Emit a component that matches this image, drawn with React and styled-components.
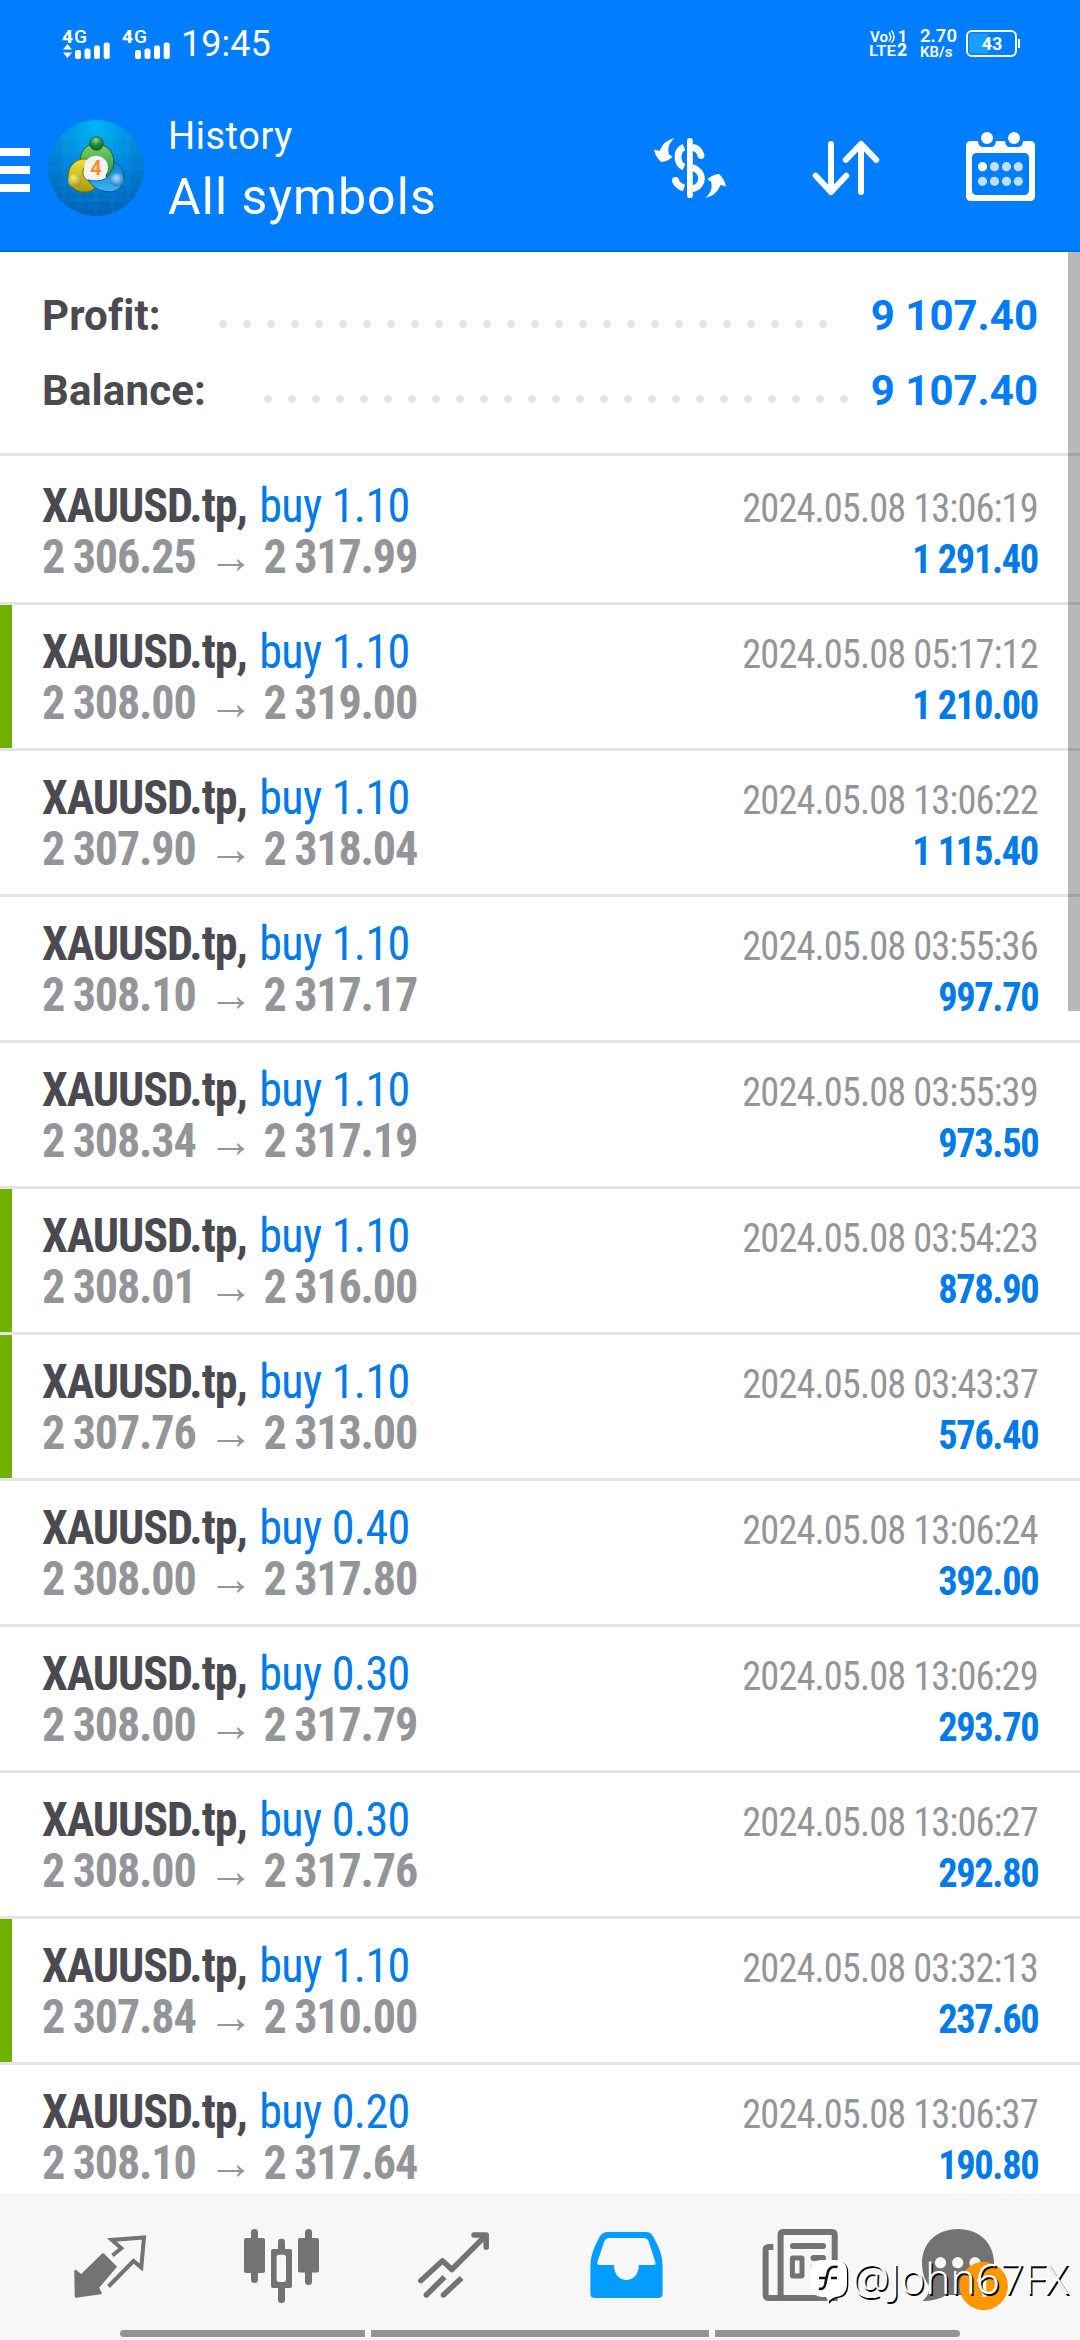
import React from 'react'
import styled, { createGlobalStyle } from 'styled-components'

const GlobalStyle = createGlobalStyle`
  body {
    margin: 0;
    background: #fff;
    font-family: Roboto, sans-serif;
  }
`

const Screen = styled.div`
  position: relative;
  width: 1080px;
  height: 2340px;
  display: flex;
  flex-direction: column;
  overflow: hidden;
  background: #fff;
`

const Header = styled.header`
  flex: none;
  box-sizing: border-box;
  height: 252px;
  color: #fff;
  background: #007eff;
  border-bottom: 2px solid #0070e0;
`

const StatusBar = styled.div`
  box-sizing: border-box;
  height: 84px;
  padding: 3px 58px 0 62px;
  display: flex;
  align-items: center;
`

const Signal = styled.svg`
  flex: none;
  width: 50px;
  height: 40px;
  margin-right: 10px;
`

const Clock = styled.div`
  margin-left: -1px;
  font-size: 36px;
  line-height: 40px;
`

const StatusRight = styled.div`
  margin-left: auto;
  display: flex;
  align-items: center;
`

const Volte = styled.svg`
  width: 42px;
  height: 36px;
`

const Speed = styled.div`
  width: 46px;
  margin-left: 9px;
  font-size: 18.5px;
  line-height: 16px;
  font-weight: 600;
  white-space: nowrap;
`

const SpeedUnit = styled.div`
  font-size: 15px;
`

const Toolbar = styled.div`
  height: 168px;
  padding-right: 38px;
  display: flex;
  align-items: center;
`

const Menu = styled.div`
  width: 30px;
  margin-top: 4px;
  display: grid;
  gap: 10px;
`

const MenuLine = styled.div`
  height: 8px;
  background: #fff;
`

const Logo = styled.svg`
  width: 96px;
  height: 96px;
  margin-left: 18px;
`

const Titles = styled.div`
  flex: 1;
  align-self: flex-start;
  margin: 26px 0 0 24px;
`

const Title = styled.div`
  font-size: 38px;
  line-height: 52px;
  letter-spacing: 0.55px;
`

const Subtitle = styled.div`
  font-size: 50px;
  line-height: 70px;
  letter-spacing: 1.05px;
`

const Actions = styled.div`
  display: flex;
  gap: 70px;
`

const ActionIcon = styled.svg`
  width: 84px;
  height: 84px;
`

const History = styled.main`
  position: relative;
  flex: 1;
  min-height: 0;
  overflow: hidden;
`

const ScrollThumb = styled.div`
  position: absolute;
  top: 0;
  right: 0;
  width: 12px;
  height: 759px;
  background: rgba(0, 0, 0, 0.28);
`

const Summary = styled.section`
  padding: 26px 42px 25px;
  border-bottom: 3px solid #e4e4e4;
`

const SummaryRow = styled.div`
  height: 75px;
  display: flex;
  align-items: center;
  font-size: 42px;
  font-weight: 700;
`

const SummaryLabel = styled.div`
  width: ${({ $width }) => $width}px;
  letter-spacing: 0.15px;
  color: #4b4a50;
`

const Dots = styled.div`
  width: ${({ $count }) => $count * 24}px;
  height: 8px;
  margin-top: 16px;
  background: radial-gradient(circle at center, #e4e4e4 3.6px, transparent 4.2px) 0 0 / 24px 8px repeat-x;
`

const SummaryValue = styled.div`
  margin-left: auto;
  color: #007cf8;
`

const Deals = styled.section`
  padding-top: 3px;
`

const Deal = styled.article`
  height: 143px;
  display: flex;
  border-bottom: 3px solid #e4e4e4;
`

const Marker = styled.div`
  width: 12px;
  background: ${({ $marked }) => ($marked ? '#70b000' : 'transparent')};
`

const DealBody = styled.div`
  flex: 1;
  padding: 21px 42px 0 30px;
`

const Line = styled.div`
  height: 51px;
  display: flex;
  align-items: baseline;
  justify-content: space-between;
  line-height: 51px;
  white-space: nowrap;
  font-stretch: 75%;
`

const LeftText = styled.div`
  font-size: 48px;
  font-weight: 700;
  transform: scaleX(0.96);
  transform-origin: left;
`

const RightText = styled.div`
  font-size: 40px;
  transform: scaleX(0.96);
  transform-origin: right;
`

const Symbol = styled(LeftText)`
  letter-spacing: -1.1px;
  color: #4b4a50;
`

const Side = styled.span`
  margin-left: 3px;
  font-weight: 400;
  letter-spacing: -0.6px;
  color: #007be8;
`

const Prices = styled(LeftText)`
  letter-spacing: -1.2px;
  word-spacing: -1px;
  color: #949599;
`

const Arrow = styled.span`
  margin: 0 12px 0 13px;
  font-family: "Liberation Sans", sans-serif;
  font-size: 47px;
  font-weight: 400;
`

const DealTime = styled(RightText)`
  letter-spacing: -0.93px;
  color: #949599;
`

const DealProfit = styled(RightText)`
  font-weight: 700;
  letter-spacing: -1.4px;
  color: #007be8;
`

const TabBar = styled.nav`
  flex: none;
  height: 147px;
  background: #f7f7f7;
`

const Tabs = styled.div`
  height: 137px;
  padding: 0 24px;
  display: grid;
  grid-template-columns: repeat(6, 1fr);
  justify-items: center;
`

const TabIcon = styled.svg`
  width: 96px;
  height: 96px;
  margin-top: 27px;
`

const Grips = styled.div`
  display: grid;
  grid-template-columns: 245px 338px 245px;
  gap: 6px;
  padding: 0 120px;
`

const Grip = styled.div`
  height: 7px;
  background: #949494;

  &:first-child {
    border-radius: 4px 0 0 4px;
  }

  &:last-child {
    border-radius: 0 4px 4px 0;
  }
`

const Watermark = styled.div`
  position: absolute;
  left: 810px;
  bottom: 35px;
  display: flex;
  align-items: center;
  gap: 2px;
  color: #fff;
  font-family: "Noto Sans", "Open Sans", sans-serif;
  font-size: 42px;
  font-weight: 300;
  line-height: 54px;
  letter-spacing: 0.2px;
  text-shadow: 1.5px 1.5px 0 #000;
  white-space: nowrap;
`

const WatermarkLogo = styled.svg`
  width: 40px;
  height: 46px;
  margin-top: 9px;
`

const deals = [
  { volume: '1.10', open: '2 306.25', close: '2 317.99', time: '2024.05.08 13:06:19', profit: '1 291.40' },
  { volume: '1.10', open: '2 308.00', close: '2 319.00', time: '2024.05.08 05:17:12', profit: '1 210.00', marked: true },
  { volume: '1.10', open: '2 307.90', close: '2 318.04', time: '2024.05.08 13:06:22', profit: '1 115.40' },
  { volume: '1.10', open: '2 308.10', close: '2 317.17', time: '2024.05.08 03:55:36', profit: '997.70' },
  { volume: '1.10', open: '2 308.34', close: '2 317.19', time: '2024.05.08 03:55:39', profit: '973.50' },
  { volume: '1.10', open: '2 308.01', close: '2 316.00', time: '2024.05.08 03:54:23', profit: '878.90', marked: true },
  { volume: '1.10', open: '2 307.76', close: '2 313.00', time: '2024.05.08 03:43:37', profit: '576.40', marked: true },
  { volume: '0.40', open: '2 308.00', close: '2 317.80', time: '2024.05.08 13:06:24', profit: '392.00' },
  { volume: '0.30', open: '2 308.00', close: '2 317.79', time: '2024.05.08 13:06:29', profit: '293.70' },
  { volume: '0.30', open: '2 308.00', close: '2 317.76', time: '2024.05.08 13:06:27', profit: '292.80' },
  { volume: '1.10', open: '2 307.84', close: '2 310.00', time: '2024.05.08 03:32:13', profit: '237.60', marked: true },
  { volume: '0.20', open: '2 308.10', close: '2 317.64', time: '2024.05.08 13:06:37', profit: '190.80' }
]

const SignalIcon = ({ active }) => (
  <Signal viewBox='0 -4 50 40' fill='#fff'>
    <text x='0' y='15' fontSize='19' fontWeight='800'>4</text>
    <text x='12' y='15' fontSize='19' fontWeight='500' textLength='13' lengthAdjust='spacingAndGlyphs'>G</text>
    {active && <path d='M1 21.5 L5.5 16 L10 21.5Z M1 24.5 H10 L5.5 30Z' />}
    <rect x='13' y='22' width='6' height='9' rx='2' />
    <rect x='22.5' y='20.5' width='6' height='10.5' rx='2' />
    <rect x='32' y='17.5' width='6' height='13.5' rx='2' />
    <rect x='41.7' y='14.5' width='6' height='16.5' rx='2' />
  </Signal>
)

const VolteIcon = () => (
  <Volte viewBox='0 -3 42 36' fill='#fff' fontWeight='600'>
    <text x='1' y='12.5' fontSize='15.5' textLength='18' lengthAdjust='spacingAndGlyphs'>Vo</text>
    <path d='M20 3.5 Q23.5 8 20 12.5 M22.5 1.5 Q27.5 8 22.5 13.8' fill='none' stroke='#fff' strokeWidth='1.5' />
    <text x='29' y='12.5' fontSize='16' fontWeight='700'>1</text>
    <text x='0' y='27' fontSize='15.5' textLength='27' lengthAdjust='spacingAndGlyphs'>LTE</text>
    <text x='28' y='27' fontSize='17.5' fontWeight='800'>2</text>
  </Volte>
)

const Battery = () => (
  <svg width='56' height='30' viewBox='0 0 56 30'>
    <rect x='1' y='2' width='49' height='25' rx='5' fill='none' stroke='#fff' strokeWidth='2' />
    <path d='M3.5 7 Q3.5 4.5 6 4.5 H22 V24.5 H6 Q3.5 24.5 3.5 22Z' fill='#19a0ff' />
    <rect x='52' y='10' width='2' height='9' fill='#fff' />
    <text x='26' y='21' fontSize='18' fontWeight='700' fill='#fff' textAnchor='middle'>43</text>
  </svg>
)

const LogoIcon = () => (
  <Logo viewBox='0 0 96 96'>
    <defs>
      <radialGradient id='disc' cx='50%' cy='8%' r='95%'>
        <stop offset='0' stopColor='#00b4f5' />
        <stop offset='0.5' stopColor='#0085dc' />
        <stop offset='1' stopColor='#005fb4' />
      </radialGradient>
      <linearGradient id='green' x1='0' y1='0' x2='0' y2='1'>
        <stop offset='0' stopColor='#7fd06c' />
        <stop offset='1' stopColor='#1c8a2c' />
      </linearGradient>
      <linearGradient id='yellow' x1='0' y1='0' x2='0' y2='1'>
        <stop offset='0' stopColor='#f0e232' />
        <stop offset='1' stopColor='#a89a0c' />
      </linearGradient>
      <linearGradient id='blue' x1='0' y1='0' x2='0' y2='1'>
        <stop offset='0' stopColor='#1283c8' />
        <stop offset='1' stopColor='#38b4f0' />
      </linearGradient>
      <radialGradient id='greenHead' cx='45%' cy='25%' r='75%'>
        <stop offset='0' stopColor='#8fd890' />
        <stop offset='0.5' stopColor='#22903a' />
        <stop offset='1' stopColor='#0b6420' />
      </radialGradient>
      <radialGradient id='yellowHead' cx='40%' cy='30%' r='75%'>
        <stop offset='0' stopColor='#f4ec80' />
        <stop offset='1' stopColor='#9c8c08' />
      </radialGradient>
      <radialGradient id='blueHead' cx='45%' cy='35%' r='75%'>
        <stop offset='0' stopColor='#a4dcff' />
        <stop offset='1' stopColor='#0a6cb8' />
      </radialGradient>
    </defs>
    <circle cx='48' cy='48' r='48' fill='url(#disc)' />
    <path
      d='M16 14 V82 M32 4 V92 M48 0 V96 M64 4 V92 M80 14 V82 M14 16 H82 M4 32 H92 M0 48 H96 M4 64 H92 M14 80 H82'
      stroke='#3cc0ff'
      strokeWidth='0.7'
      opacity='0.25'
    />
    <path d='M38 64 L58 64 L66 50 L48 30 L32 50Z' fill='#e8f6ff' />
    <path d='M32 44 C31 31 38 24 48 24 C59 24 66 32 66 43 C66 51 63 57 59 61 C58 52 56 45 52 41 C46 36 39 39 36 44Z' fill='url(#green)' stroke='#08682a' strokeWidth='1' />
    <path d='M38 39 C28 38 20 46 20 57 C21 68 30 73 39 72 C45 71 49 67 50 62 C40 63 34 58 35 51 C36 46 40 43 43 42Z' fill='url(#yellow)' stroke='#746800' strokeWidth='1' />
    <path d='M66 42 C73 45 77 54 75 62 C72 71 64 73 56 71 C49 70 44 66 40 60 C49 62 57 61 61 55 C64 51 66 46 66 42Z' fill='url(#blue)' stroke='#075a9c' strokeWidth='1' />
    <circle cx='48.5' cy='23.5' r='6.8' fill='url(#greenHead)' stroke='#08582a' strokeWidth='0.7' />
    <circle cx='27' cy='60.5' r='7' fill='url(#yellowHead)' />
    <circle cx='69' cy='60' r='6.8' fill='url(#blueHead)' />
    <circle cx='48' cy='47.7' r='12' fill='#f3f3f6' />
    <text x='48' y='54.7' fontSize='20' fontWeight='700' fill='#ff8a20' textAnchor='middle'>4</text>
  </Logo>
)

const swoosh = 'M24.7 12 C18.5 17 17.5 23 19 28.5 L22.7 30.5 Q18 35.5 11 36 Q5.5 31 4 23.5 L9.5 25 Q13.5 14.5 24.7 12Z'

const DollarIcon = () => (
  <ActionIcon viewBox='0 0 84 84' fill='none' stroke='#fff' strokeWidth='6.8'>
    <path d='M39.9 14.8 V69.2' strokeWidth='5.8' strokeLinecap='round' />
    <path d='M42.5 21.5 C47 22 50 25.5 51 29.5' />
    <circle cx='51' cy='29.5' r='3.4' fill='#fff' stroke='none' />
    <path d='M34 21.2 C26 24.5 26 37.5 34 41.2' />
    <path d='M42.5 41.5 C54.5 45 54.5 60.5 42.5 62.7' />
    <path d='M34 62 C29.5 60.5 26.5 58 25.5 54.5' />
    <circle cx='25.5' cy='54.5' r='3.4' fill='#fff' stroke='none' />
    <path d={swoosh} fill='#fff' stroke='none' />
    <path d={swoosh} fill='#fff' stroke='none' transform='rotate(180 40 42)' />
  </ActionIcon>
)

const SortIcon = () => (
  <ActionIcon viewBox='0 0 84 84' fill='none' stroke='#fff' strokeWidth='6' strokeLinecap='round' strokeLinejoin='round'>
    <path d='M27 18 V66 M11.7 49.8 L27 66 L42.2 49.8' />
    <path d='M57 66 V18 M41.8 33.8 L57 18 L72.3 33.8' />
  </ActionIcon>
)

const CalendarIcon = () => (
  <ActionIcon viewBox='0 0 84 84' fill='#fff'>
    <path
      fillRule='evenodd'
      d='M13 15 H20 Q20.5 21 25 21 H33 Q37.5 21 38 15 H47 Q47.5 21 52 21 H60 Q64.5 21 65 15 H72 Q77 15 77 20 V70 Q77 75 72 75 H13 Q8 75 8 70 V20 Q8 15 13 15Z M19 27 Q14 27 14 32 V64 Q14 69 19 69 H66 Q71 69 71 64 V32 Q71 27 66 27Z'
    />
    <circle cx='29' cy='12' r='6' />
    <circle cx='56' cy='12' r='6' />
    {[40.7, 55.3].map(y => [24.5, 36.5, 48.5, 60.3].map(x => (
      <circle key={`${x}-${y}`} cx={x} cy={y} r='4.6' opacity={x < 30 && y < 50 ? 1 : 0.75} />
    )))}
  </ActionIcon>
)

const QuotesIcon = () => (
  <TabIcon viewBox='0 0 96 96'>
    <path d='M41 34.5 L53.5 46.8 L35.8 67.5 L38.5 73 L14 76.5 L13.5 51 L19.3 55.7Z' fill='#737373' stroke='#737373' strokeWidth='2.5' strokeLinejoin='round' />
    <path d='M50.5 35.5 L59.3 28.3 L49.8 20 L82 17.5 L79.3 47.5 L71.5 41 L46.5 66.5' fill='none' stroke='#737373' strokeWidth='4' />
  </TabIcon>
)

const ChartIcon = () => (
  <TabIcon viewBox='0 0 96 96' fill='#737373'>
    <rect x='17' y='9' width='7' height='54' rx='3.5' />
    <rect x='10' y='18' width='21' height='35' rx='2' />
    <rect x='71' y='9' width='7' height='56' rx='3.5' />
    <rect x='64' y='18' width='21' height='34.5' rx='2' />
    <rect x='44' y='18.7' width='7' height='64.3' rx='3' />
    <rect x='37' y='29' width='21' height='39' rx='2' />
    <rect x='42.6' y='34.7' width='9.4' height='27.3' rx='2.5' fill='#f7f7f7' />
  </TabIcon>
)

const TradeIcon = () => (
  <TabIcon viewBox='0 0 96 96' fill='none' stroke='#737373' strokeWidth='5.5' strokeLinejoin='round'>
    <path d='M14.8 60.7 L36.5 40.8 L45.8 49.5 L79.5 15.8' strokeLinecap='round' />
    <path d='M68 15 H80.2 V27.3' strokeLinecap='round' />
    <path d='M38.5 57 L20.3 75 M55.6 58 L37.4 75' />
    <path d='M20.3 75 h0.01 M37.4 75 h0.01' strokeLinecap='round' />
  </TabIcon>
)

const HistoryIcon = () => (
  <TabIcon viewBox='0 0 96 96'>
    <path
      fill='#059cff'
      fillRule='evenodd'
      d='M30 12 H68 Q73 12 75.5 17 Q84.6 33 84.6 45 V74 Q84.6 78 80 78 H17 Q12.4 78 12.4 74 V45 Q12.4 33 21.5 17 Q24 12 30 12Z M31.5 18 Q28 18 26.5 21 L19.5 41.5 Q18.5 45 21.5 45 H36 C36 65 60.8 65 60.8 45 H75 Q78.5 45 77.2 41.5 L70.5 21 Q69 18 65.5 18Z'
    />
  </TabIcon>
)

const NewsIcon = () => (
  <TabIcon viewBox='0 0 96 96' fill='none' stroke='#737373' strokeWidth='6'>
    <path d='M33 12 H82 Q84.7 12 84.7 15 V78 H18 Q15.6 78 15.6 74.5 V30 Q15.6 27 19 27 H23.3' />
    <path d='M30.6 78 V14.5 Q30.6 12 33.5 12' />
    <path d='M43 26 H73' strokeLinecap='round' />
    <path d='M63.5 38 H73 M63.5 47 H73' strokeLinecap='round' />
    <rect x='42.4' y='38' width='9.6' height='18' strokeWidth='5' rx='0.5' />
  </TabIcon>
)

const ChatIcon = () => (
  <TabIcon viewBox='0 0 96 96'>
    <path d='M36 9 C57 9 72 23 72 43 C72 63 57 75 38 75 H25 Q14 81 0.5 81 Q7 75 8 67 Q0 58 0 43 C0 23 15 9 36 9Z' fill='#737373' />
    <circle cx='18.5' cy='42.7' r='5.6' fill='#f7f7f7' />
    <circle cx='35.7' cy='42.7' r='5.6' fill='#f7f7f7' />
    <circle cx='53' cy='42.7' r='5.6' fill='#f7f7f7' />
    <circle cx='61.7' cy='66' r='24.2' fill='#ff9800' />
    <text x='61.5' y='76.5' fontSize='30' fontWeight='500' fill='#fff' textAnchor='middle'>1</text>
  </TabIcon>
)

const BrandIcon = () => (
  <WatermarkLogo viewBox='0 0 40 46'>
    <path d='M13 2 H26 Q38.3 2 38.3 14 V26 Q38.3 38 28 39 Q23 40 19 45 L18.5 39Z' fill='#000' />
    <path d='M12 1 H25 Q37 1 37 13 V25 Q37 37 26 38 Q21 39 18 43.5 Q18 40 16 38 H12 Q0 37 0 25 V13 Q0 1 12 1Z' fill='#fff' />
    <path d='M27.5 8 Q19 6.5 17.5 14.5 L15 26 Q13.5 31 9 29.5 M9 19 H17 M21 19 H27' fill='none' stroke='#111' strokeWidth='2.6' />
  </WatermarkLogo>
)

const SummaryItem = ({ label, value, labelWidth, dots }) => (
  <SummaryRow>
    <SummaryLabel $width={labelWidth}>{label}</SummaryLabel>
    <Dots $count={dots} />
    <SummaryValue>{value}</SummaryValue>
  </SummaryRow>
)

const DealItem = ({ volume, open, close, time, profit, marked }) => (
  <Deal>
    <Marker $marked={marked} />
    <DealBody>
      <Line>
        <Symbol>XAUUSD.tp, <Side>buy {volume}</Side></Symbol>
        <DealTime>{time}</DealTime>
      </Line>
      <Line>
        <Prices>{open}<Arrow>→</Arrow>{close}</Prices>
        <DealProfit>{profit}</DealProfit>
      </Line>
    </DealBody>
  </Deal>
)

const App = () => (
  <Screen>
    <GlobalStyle />
    <Header>
      <StatusBar>
        <SignalIcon active />
        <SignalIcon />
        <Clock>19:45</Clock>
        <StatusRight>
          <VolteIcon />
          <Speed>
            2.70
            <SpeedUnit>KB/s</SpeedUnit>
          </Speed>
          <Battery />
        </StatusRight>
      </StatusBar>
      <Toolbar>
        <Menu>
          <MenuLine />
          <MenuLine />
          <MenuLine />
        </Menu>
        <LogoIcon />
        <Titles>
          <Title>History</Title>
          <Subtitle>All symbols</Subtitle>
        </Titles>
        <Actions>
          <DollarIcon />
          <SortIcon />
          <CalendarIcon />
        </Actions>
      </Toolbar>
    </Header>
    <History>
      <Summary>
        <SummaryItem label='Profit:' value='9 107.40' labelWidth={169} dots={26} />
        <SummaryItem label='Balance:' value='9 107.40' labelWidth={214} dots={25} />
      </Summary>
      <Deals>
        {deals.map((deal, i) => <DealItem key={i} {...deal} />)}
      </Deals>
      <ScrollThumb />
    </History>
    <TabBar>
      <Tabs>
        <QuotesIcon />
        <ChartIcon />
        <TradeIcon />
        <HistoryIcon />
        <NewsIcon />
        <ChatIcon />
      </Tabs>
      <Grips>
        <Grip />
        <Grip />
        <Grip />
      </Grips>
    </TabBar>
    <Watermark>
      <BrandIcon />
      @John67FX
    </Watermark>
  </Screen>
)

export default App
